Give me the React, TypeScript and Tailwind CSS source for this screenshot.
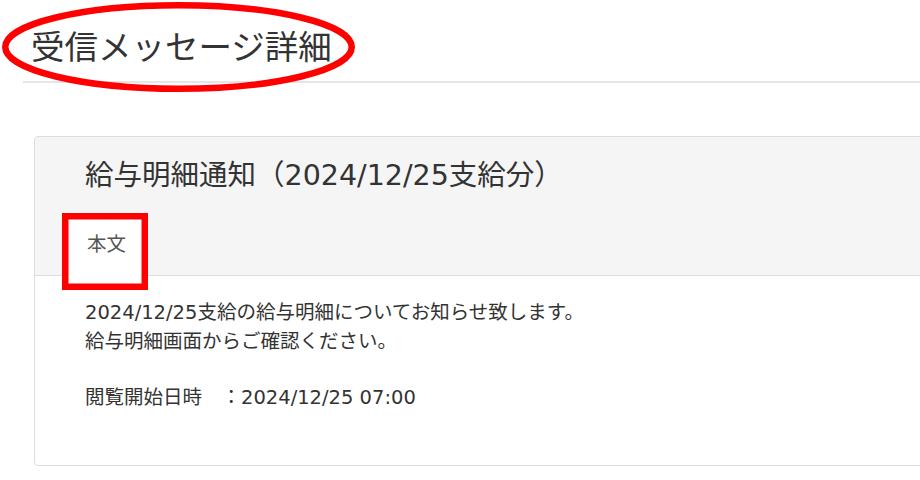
import React from "react";

const font = { fontFamily: '"DejaVu Sans", "Noto Sans CJK JP", sans-serif' };

export default function App() {
  return (
    <div
      className="relative w-[920px] h-[480px] overflow-hidden bg-white text-[#333]"
      style={font}
    >
      {/* page heading */}
      <div className="ml-[23px] border-b-2 border-[#e6e6e6] pl-[8px] pt-[30.5px] pb-[17px]">
        <h1 className="text-[33.5px] leading-[33.5px] font-normal text-[#333]">
          受信メッセージ詳細
        </h1>
      </div>

      {/* card */}
      <div className="ml-[34px] mt-[53px] w-[1000px] rounded-[4px] border border-[#dddddd] bg-white">
        <div className="flex flex-col rounded-t-[4px] border-b border-[#dddddd] bg-[#f5f5f5] pt-[25.25px]">
          <div className="pl-[50px] text-[28.5px] leading-[28.5px] text-[#333]">
            給与明細通知（2024/12/25支給分）
          </div>
          <div className="relative -mb-px ml-[31px] mt-[25.25px] h-[60px] w-[78px] border border-b-0 border-[#dddddd] bg-white pl-[20px] pt-[18px]">
            <span className="block text-[19.5px] leading-[19.5px] text-[#555]">
              本文
            </span>
          </div>
        </div>
        <div className="pl-[50px] pt-[21.5px] pb-[53.5px] text-[19.5px] leading-[29px] text-[#333]">
          <p>
            2024/12/25支給の給与明細についてお知らせ致します。
            <br />
            給与明細画面からご確認ください。
          </p>
          <p className="mt-[27.25px]">閲覧開始日時　：2024/12/25 07:00</p>
        </div>
      </div>

      {/* red annotations */}
      <svg
        className="pointer-events-none absolute left-0 top-0"
        width="920"
        height="480"
        viewBox="0 0 920 480"
      >
        <ellipse
          cx="178.5"
          cy="47"
          rx="173.25"
          ry="41.75"
          fill="none"
          stroke="#ff0000"
          strokeWidth="6.5"
        />
        <rect
          x="65.25"
          y="216.25"
          width="79.5"
          height="70.5"
          fill="none"
          stroke="#ff0000"
          strokeWidth="6.5"
        />
      </svg>
    </div>
  );
}
